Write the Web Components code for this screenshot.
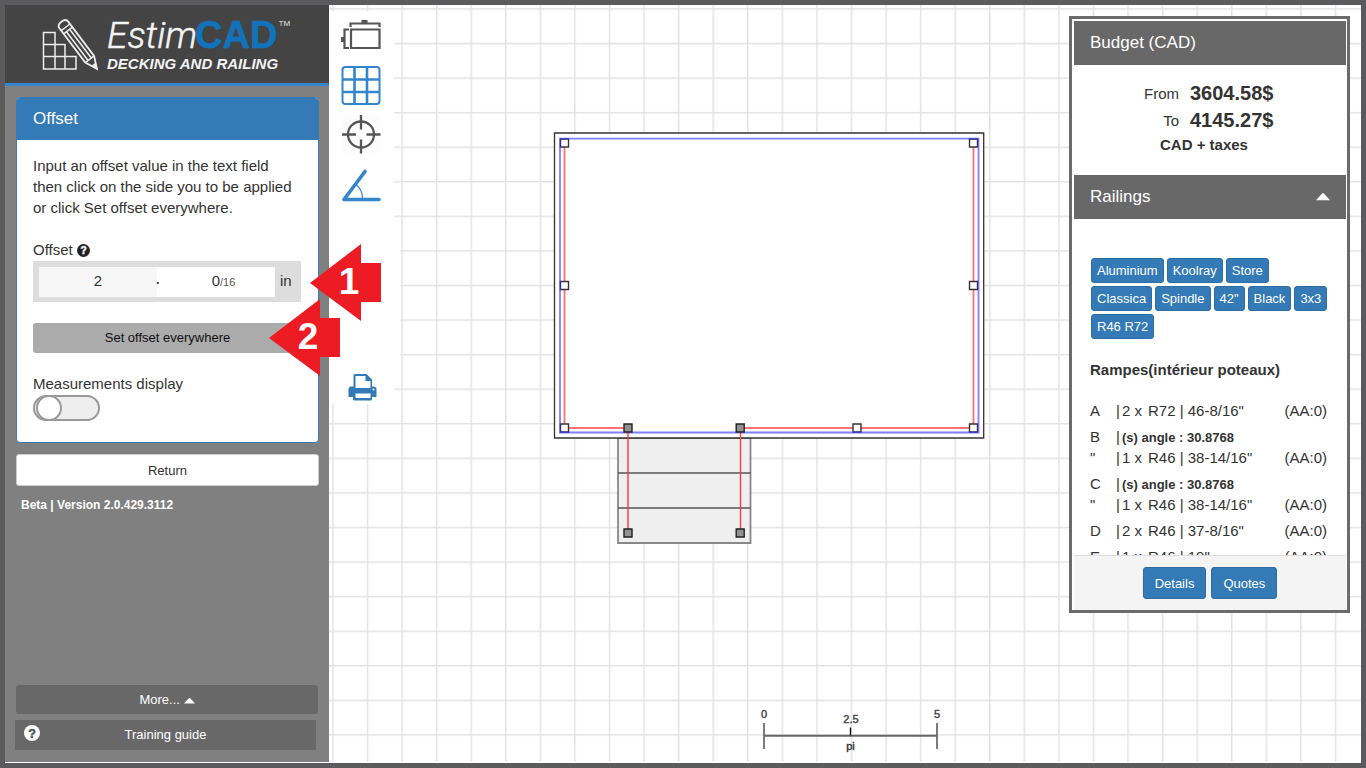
<!DOCTYPE html>
<html lang="en">
<head>
<meta charset="utf-8">
<meta name="viewport" content="width=device-width, initial-scale=1">
<title>EstimCAD</title>
<style>
  html, body { margin: 0; height: 100%; }
  body {
    font-family: "Liberation Sans", Arial, sans-serif;
    font-size: 15px; line-height: 21px; color: #333;
    --blue: #337ab7; --bar: #686868; --frame: #5b5b5d;
  }
</style>
</head>
<body>
<ec-app>
  <ec-sidebar slot="side">
    <ec-panel heading="Offset">
      <p slot="intro" style="margin:0">Input an offset value in the text field then click on the side you to be applied or click Set offset everywhere.</p>
      <ec-offset-field></ec-offset-field>
      <ec-button kind="grey">Set offset everywhere</ec-button>
      <ec-toggle></ec-toggle>
    </ec-panel>
    <ec-button kind="white">Return</ec-button>
    <ec-version>Beta | Version 2.0.429.3112</ec-version>
    <ec-button slot="foot" kind="dark">More... <ec-caret></ec-caret></ec-button>
    <ec-guide-link slot="foot">Training guide</ec-guide-link>
  </ec-sidebar>
  <ec-plan></ec-plan>
  <ec-toolbar slot="tools"></ec-toolbar>
  <ec-budget slot="budget"></ec-budget>
  <ec-callout slot="notes" number="1" style="left:305px;top:239px"></ec-callout>
  <ec-callout slot="notes" number="2" style="left:264px;top:294px"></ec-callout>
</ec-app>

<script>
function component(name, html, setup) {
  const template = document.createElement('template');
  template.innerHTML = html;
  customElements.define(name, class extends HTMLElement {
    connectedCallback() {
      if (this.shadowRoot) return;
      this.attachShadow({ mode: 'open' }).append(template.content.cloneNode(true));
      if (setup) setup(this, this.shadowRoot);
    }
  });
}

component('ec-app', `
<style>
  :host { display: flex; position: relative; box-sizing: border-box; height: 100vh; border: 5px solid var(--frame); padding-bottom: 1px; background: #fff; overflow: hidden; }
  .side { flex: 0 0 324px; min-width: 0; display: flex; }
  main { flex: 1; position: relative; min-width: 0; display: flex; }
  .tools { position: absolute; left: 0; top: 6px; }
  .budget { position: absolute; right: 11px; top: 11px; }
</style>
<div class="side"><slot name="side"></slot></div>
<main>
  <slot></slot>
  <div class="tools"><slot name="tools"></slot></div>
  <div class="budget"><slot name="budget"></slot></div>
</main>
<slot name="notes"></slot>`);

component('ec-sidebar', `
<style>
  :host { display: flex; flex-direction: column; flex: 1; min-width: 0; background: #808080; }
  .body { display: flex; flex-direction: column; gap: 11px; padding: 11px 10px 0 11px; flex: 1; }
  .foot { display: flex; flex-direction: column; gap: 6px; padding: 0 11px 12px; }
</style>
<ec-logo></ec-logo>
<div class="body"><slot></slot></div>
<div class="foot"><slot name="foot"></slot></div>`);

component('ec-logo', `
<style>
  :host { display: block; height: 78px; background: #444; border-bottom: 3px solid #3385cc; }
  svg { display: block; width: 100%; font-family: "Liberation Sans", Arial, sans-serif; fill: #f4f4f4; }
</style>
<svg height="78" role="img" aria-label="EstimCAD Decking and Railing">
  <g fill="none" stroke="#eee" stroke-width="1.500">
    <path d="M38.500 27.500h11.500v36.500h-11.500zM38.500 39.500h21.500v24.500h-21.500M38.500 51.500h32.500v12.500h-32.500"/>
    <g transform="translate(57 17.500) rotate(-37)">
      <path d="M-5.500 3q0-4 5.500-4t5.500 4v43l-5.500 12-5.500-12z" fill="#444" stroke-width="1.800"/>
      <path d="M-5.500 6h11M-5.500 10h11M-5.500 46h11M-2 10v36M2 10v36"/>
      <path d="M-2 53h4l-2 5z" fill="#eee"/>
    </g>
  </g>
  <text x="102" y="43" font-size="37" font-family="Roboto, sans-serif" font-weight="300" font-style="italic" stroke="#f4f4f4" stroke-width=".5">Estim</text>
  <text x="190" y="43" font-size="38" font-weight="700" fill="#1173bb" stroke="#1173bb" stroke-width=".6">CAD</text>
  <text x="273" y="25" font-size="13" fill="#ccc">™</text>
  <text x="102" y="64" font-size="15" font-weight="700" font-style="italic">DECKING AND RAILING</text>
</svg>`);

component('ec-panel', `
<style>
  :host { display: block; border: 1px solid var(--blue); border-radius: 4px; background: #fff; overflow: hidden; }
  h2 { margin: 0; padding: 10px 16px 11px; background: var(--blue); color: #fff; font-size: 17px; font-weight: 400; line-height: 21px; }
  .body { display: flex; flex-direction: column; gap: 21px; padding: 15px 16px 21px; }
</style>
<h2></h2>
<div class="body"><slot name="intro"></slot><slot></slot></div>`,
(el, root) => { root.querySelector('h2').textContent = el.getAttribute('heading'); });

component('ec-help', `
<style>:host { display: inline-block; vertical-align: -2px; } svg { display: block; }</style>
<svg viewBox="0 0 14 14" aria-hidden="true"><circle cx="7" cy="7" r="7"/><text x="7" y="11" text-anchor="middle" font-size="11" font-weight="700" stroke-width=".5" font-family="Liberation Sans, sans-serif">?</text></svg>`,
(el, root) => {
  const svg = root.querySelector('svg'), size = el.getAttribute('size') || '13';
  svg.setAttribute('width', size); svg.setAttribute('height', size);
  svg.querySelector('circle').setAttribute('fill', el.getAttribute('disc') || '#222');
  svg.querySelector('text').setAttribute('fill', el.getAttribute('mark') || '#fff');
  svg.querySelector('text').setAttribute('stroke', el.getAttribute('mark') || '#fff');
});

component('ec-offset-field', `
<style>
  :host { display: block; }
  label { display: block; }
  .row { display: flex; align-items: center; height: 30px; padding: 6px 6px 5px; margin: 1px 1px 0 0; background: #ddd; }
  .whole, .part { flex: 1; min-width: 0; height: 30px; box-sizing: border-box; }
  .part { display: flex; align-items: center; background: #fff; }
  input { font: inherit; color: inherit; border: 0; padding: 0 0 3px; outline: 0; text-align: center; }
  .whole { background: #f7f7f7; }
  .part i { width: 4px; font-style: normal; font-weight: 700; font-size: 13px; margin-left: -1px; }
  .part input { width: 60px; text-align: right; background: none; }
  small { font-size: 11px; color: #555; }
  .unit { margin-left: 5px; width: 15px; padding-bottom: 3px; }
</style>
<label for="whole">Offset <ec-help></ec-help></label>
<div class="row">
  <input class="whole" id="whole" value="2">
  <span class="part"><i>·</i><input value="0" aria-label="Sixteenths"><small>/16</small></span>
  <span class="unit">in</span>
</div>`);

component('ec-button', `
<style>
  :host { display: block; }
  button { display: block; width: 100%; height: 30px; padding: 0; border: 0; border-radius: 3px; font: inherit; font-size: 13px; line-height: 18px; cursor: pointer; }
  :host([kind=grey]) button { background: #ababab; color: #111; }
  :host([kind=white]) button { height: 32px; padding-top: 2px; background: #fff; color: #333; border: 1px solid #ccc; }
  :host([kind=dark]) button { height: 29px; padding-top: 1px; background: var(--bar); color: #fff; }
  :host([kind=blue]) button { height: 32px; padding: 2px 11px 0; background: var(--blue); color: #fff; border: 1px solid #2e6da4; }
</style>
<button type="button"><slot></slot></button>`);

component('ec-toggle', `
<style>
  :host { display: block; }
  label { display: block; line-height: 20px; padding-bottom: 1px; }
  input { appearance: none; display: flex; align-items: center; box-sizing: border-box; width: 67px; height: 26px; margin: 0; border: 2px solid #999; border-radius: 13px; background: #eee; }
  input::before { content: ""; box-sizing: border-box; width: 26px; height: 26px; margin-left: 1px; border: 2px solid #999; border-radius: 50%; background: #fff; }
  input:checked { justify-content: flex-end; background: var(--blue); }
</style>
<label for="measure">Measurements display</label>
<input type="checkbox" id="measure" role="switch">`);

component('ec-version', `
<style>:host { display: block; padding: 0 5px; font-size: 12px; line-height: 16px; font-weight: 700; color: #fff; }</style><slot></slot>`);

component('ec-caret', `
<style>:host { display: inline-block; } svg { display: block; }</style>
<svg width="11" height="6" viewBox="0 0 11 6" fill="#fff" aria-hidden="true"><path d="M0 5.500 5 0h1l5 5.500z"/></svg>`,
(el, root) => {
  if (!el.hasAttribute('large')) return;
  const svg = root.querySelector('svg');
  svg.setAttribute('width', 14); svg.setAttribute('height', 8);
});

component('ec-guide-link', `
<style>
  :host { display: block; margin: 0 2px 0 -1px; }
  a { display: grid; grid-template-columns: 16px 1fr 16px; align-items: center; box-sizing: border-box; height: 30px; padding: 0 9px 2px; background: var(--bar); color: #fff; text-decoration: none; font-size: 13px; text-align: center; }
  ec-help { margin-bottom: 2px; }
</style>
<a href="#guide"><ec-help size="16" disc="#fff" mark="#555"></ec-help><span><slot></slot></span></a>`);

component('ec-toolbar', `
<style>
  :host { display: block; }
  nav { display: flex; flex-direction: column; align-items: center; gap: 9px; box-sizing: border-box; width: 65px; height: 393px; padding: 5px 1px 0 0; background: #fff; }
  button { display: block; padding: 0; border: 0; background: none; cursor: pointer; }
  button:last-child { margin-top: auto; }
  svg { display: block; }
</style>
<nav aria-label="Drawing tools">
  <button aria-label="Dimensions"><svg width="40" height="40" fill="none" stroke="#555" stroke-width="2.200">
    <path d="M10 13.500h28.500v18.500h-28.500zM8 13.500h-4.500v18.500h4.500M9.500 11v-3.500h29v3.500"/><path d="M20.500 5.500h6M1.500 21v5" stroke-width="3"/></svg></button>
  <button aria-label="Grid"><svg width="40" height="40" fill="none" stroke="#3385cc" stroke-width="2"><rect x="1.500" y="2" width="37" height="37" rx="3"/><path d="M13.500 2v37M26 2v37M1.500 14.500h37M1.500 27h37" stroke-width="2.600"/></svg></button>
  <button aria-label="Center"><svg width="40" height="40" fill="none" stroke="#555" stroke-width="2.300"><rect x="1" y="1" width="38" height="38" fill="#fcfcfc" stroke="none"/><circle cx="20" cy="20.500" r="13"/><path d="M20 1v14.500M20 25.500v14M1 20.500h14M25.500 20.500h14"/></svg></button>
  <button aria-label="Angle"><svg width="40" height="40" fill="none" stroke="#3385cc" stroke-width="3.600" stroke-linecap="round" stroke-linejoin="round"><path d="M24 8.500 3 36.500h35"/><path d="M15.500 22q6 5 6 13" stroke-width="1.200"/></svg></button>
  <button aria-label="Print"><svg width="31" height="32" viewBox="-2 0 31 32" fill="#337ab7"><path d="M5.500 3.500q0-1.500 1.500-1.500h11.500l5.500 5.500v7h1.500q3 0 3 3v7.500h-4.500v2q0 1.500-1.500 1.500h-16q-1.500 0-1.500-1.500v-2h-4.500v-7.500q0-3 3-3h2z"/><path d="M7.500 4h10v5h5v7h-15zM7.500 21.500h15v4.500h-15z" fill="#fff"/><circle cx="25.500" cy="17.500" r="1" fill="#fff"/></svg></button>
</nav>`);

component('ec-plan', `
<style>
  :host { display: block; flex: 1; min-width: 0; }
  svg { display: block; width: 100%; height: 100%; font-family: "Liberation Sans", Arial, sans-serif; }
</style>
<svg aria-label="Deck plan">
  <defs>
    <pattern id="grid" x="3.200" y="3.200" width="34.570" height="34.570" patternUnits="userSpaceOnUse">
      <path d="M0 .75h34.570M.75 0v34.570" stroke="#e3e3e3" stroke-width="1.500" fill="none"/>
    </pattern>
  </defs>
  <rect width="100%" height="100%" fill="url(#grid)"/>
  <rect x="60" y="228" width="11" height="143" fill="#fff"/>
  <g transform="translate(-329 -5)" fill="none">
    <path d="M618 438h132.500v105h-132.500z" fill="#efefef" stroke="#888" stroke-width="1.800"/>
    <path d="M618 473h132.500M618 508h132.500" stroke="#555" stroke-width="1.500"/>
    <path d="M554.500 133h429.200v305h-429.200z" fill="#fff" stroke="#333" stroke-width="1.300"/>
    <path d="M564.500 143v285h63M740.500 428h233v-285" stroke="#ff7070" stroke-width="1.800"/>
    <g fill="#fff" stroke="#333" stroke-width="1.400">
      <path d="M560.500 139h8v8h-8zM969.500 139h8v8h-8zM560.500 281.500h8v8h-8zM969.500 281.500h8v8h-8zM560.500 424h8v8h-8zM969.500 424h8v8h-8zM853 424h8v8h-8z"/>
    </g>
    <path d="M560 138.700h418.500v293.800h-418.500z" stroke="#2a2aff" stroke-opacity=".6" stroke-width="1.800"/>
    <path d="M628 428v105M740.500 428v105" stroke="#ff3838" stroke-width="1.400"/>
    <path d="M624 424h8v8h-8zM736.200 424h8v8h-8zM624 529h8v8h-8zM736.200 529h8v8h-8z" fill="#929292" stroke="#222" stroke-width="1.400"/>
    <path d="M764 735.700h173" stroke="#666" stroke-width="2"/>
    <path d="M764 723v26M937 723v26" stroke="#666" stroke-width="1.700"/>
    <path d="M850.500 727.500v8" stroke="#111" stroke-width="1.400"/>
    <g font-size="11" text-anchor="middle" fill="#444" stroke="#444" stroke-width=".4">
      <text x="764" y="718">0</text><text x="851" y="723">2.5</text><text x="937" y="718">5</text>
      <text x="850.500" y="750" fill="#222">pi</text>
    </g>
  </g>
</svg>`);

component('ec-tag', `
<style>
  :host { display: block; }
  button { display: block; height: 25px; padding: 0 5px; border: 1px solid #2e6da4; border-radius: 3px; background: var(--blue); color: #fff; font: inherit; font-size: 13px; line-height: 18px; }
</style>
<button type="button"><slot></slot></button>`);

component('ec-budget', `
<style>
  :host { display: flex; flex-direction: column; box-sizing: border-box; width: 281px; border: 3px solid #6b6b6d; padding: 2px 1px 0 2px; background: #fff; }
  h2 { display: flex; justify-content: space-between; align-items: center; box-sizing: border-box; height: 44px; margin: 0; padding: 0 16px 1px; background: var(--bar); color: #fff; font-size: 17px; font-weight: 400; }
  .price { display: grid; grid-template-columns: 105px 1fr; column-gap: 11px; padding: 15px 0 17px; line-height: 27px; }
  .price dt { text-align: right; }
  .price dd { margin: 0; font-size: 20px; font-weight: 700; }
  dl { margin: 0; }
  .tax { grid-column: 1 / 3; padding: 0 0 2px 86px; line-height: 22px; font-weight: 700; }
  .scroll { height: 336px; overflow: hidden; }
  .tags { display: flex; flex-wrap: wrap; gap: 3px; padding: 39px 17px 0 17px; }
  h3 { margin: 20px 16px 15px; font-size: 15px; line-height: 21px; }
  table { border-collapse: collapse; margin-left: 16px; table-layout: fixed; width: 237px; }
  td { padding: 0; line-height: 21px; white-space: pre; }
  tr.first td { padding-top: 5px; }
  td:last-child { text-align: right; }
  b { font-size: 13px; line-height: 0; }
  footer { display: flex; justify-content: center; gap: 5px; padding: 11px 0; border-top: 1px solid #ddd; background: #f4f4f4; }
</style>
<h2>Budget (CAD)</h2>
<dl class="price"><dt>From</dt><dd>3604.58$</dd><dt>To</dt><dd>4145.27$</dd><div class="tax">CAD + taxes</div></dl>
<h2>Railings <ec-caret large></ec-caret></h2>
<div class="scroll">
  <div class="tags"></div>
  <h3>Rampes(intérieur poteaux)</h3>
  <table><colgroup><col style="width:26px"><col style="width:6px"><col style="width:26px"><col style="width:114px"><col></colgroup><tbody></tbody></table>
</div>
<footer><ec-button kind="blue">Details</ec-button><ec-button kind="blue">Quotes</ec-button></footer>`,
(el, root) => {
  root.querySelector('.tags').innerHTML = ['Aluminium', 'Koolray', 'Store', 'Classica', 'Spindle', '42"', 'Black', '3x3', 'R46 R72']
    .map(t => `<ec-tag>${t}</ec-tag>`).join('');
  const rows = [
    ['A', '2 x', 'R72 | 46-8/16"'],
    ['B', '(s) angle : 30.8768'],
    ['"', '1 x', 'R46 | 38-14/16"'],
    ['C', '(s) angle : 30.8768'],
    ['"', '1 x', 'R46 | 38-14/16"'],
    ['D', '2 x', 'R46 | 37-8/16"'],
    ['E', '1 x', 'R46 | 19"']
  ];
  root.querySelector('tbody').innerHTML = rows.map(([id, a, b]) =>
    `<tr class="${id === '"' ? '' : 'first'}"><td>${id}</td><td>|</td>` +
    (b ? `<td>${a}</td><td>${b}</td><td>(AA:0)</td>` : `<td colspan="3" style="text-align:left"><b>${a}</b></td>`) + '</tr>').join('');
});

component('ec-callout', `
<style>:host { display: block; position: absolute; } svg { display: block; }</style>
<svg width="72" height="77"><path d="M0 39 51 0v19h20v39h-20v19z" fill="#ed1c24"/><text x="39" y="50" text-anchor="middle" font-size="37" font-weight="700" fill="#fff" font-family="Liberation Sans, Arial, sans-serif"></text></svg>`,
(el, root) => { root.querySelector('text').textContent = el.getAttribute('number'); });
</script>
</body>
</html>
